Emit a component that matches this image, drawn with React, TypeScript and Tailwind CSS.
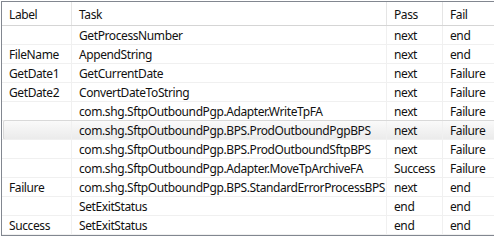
import React from "react";

const rows: [string, string, string, string][] = [
  ["", "GetProcessNumber", "next", "end"],
  ["FileName", "AppendString", "next", "end"],
  ["GetDate1", "GetCurrentDate", "next", "Failure"],
  ["GetDate2", "ConvertDateToString", "next", "Failure"],
  ["", "com.shg.SftpOutboundPgp.Adapter.WriteTpFA", "next", "Failure"],
  ["", "com.shg.SftpOutboundPgp.BPS.ProdOutboundPgpBPS", "next", "Failure"],
  ["", "com.shg.SftpOutboundPgp.BPS.ProdOutboundSftpBPS", "next", "Failure"],
  ["", "com.shg.SftpOutboundPgp.Adapter.MoveTpArchiveFA", "Success", "Failure"],
  ["Failure", "com.shg.SftpOutboundPgp.BPS.StandardErrorProcessBPS", "next", "end"],
  ["", "SetExitStatus", "end", "end"],
  ["Success", "SetExitStatus", "end", "end"],
];

const cols = "grid grid-cols-[70px_315px_56px_1fr]";

export default function App() {
  return (
    <div className="w-[494px] h-[241px] bg-white overflow-hidden pt-px pl-px">
      <div
        className="w-[520px] border-l border-t border-b border-[#828790] text-[12px] tracking-[-0.4px] text-[#111]"
        style={{ fontFamily: '"Noto Sans", "Open Sans", sans-serif' }}
      >
        <div className={`${cols} h-[24px] border-b border-[#d5d5d5]`}>
          {["Label", "Task", "Pass", "Fail"].map((h) => (
            <div
              key={h}
              className="flex items-center border-r border-[#e5e5e5] pl-[7px] pt-[2px]"
            >
              {h}
            </div>
          ))}
        </div>
        {rows.map((r, idx) => {
          const sel = idx === 5;
          return (
            <div key={idx} className="relative">
              {sel && (
                <div className="absolute left-[1px] right-0 top-[-1px] bottom-0 rounded-[2px] border border-[#d9d9d9] bg-gradient-to-b from-[#fafafa] to-[#ebebeb]" />
              )}
              <div className={`${cols} relative h-[19px] border-b border-[#f0f0f0]`}>
                {r.map((c, i) => (
                  <div
                    key={i}
                    className="flex items-center pl-[7px] pt-[2px] border-r border-[#f0f0f0] whitespace-nowrap overflow-hidden"
                  >
                    {c}
                  </div>
                ))}
              </div>
            </div>
          );
        })}
      </div>
    </div>
  );
}
